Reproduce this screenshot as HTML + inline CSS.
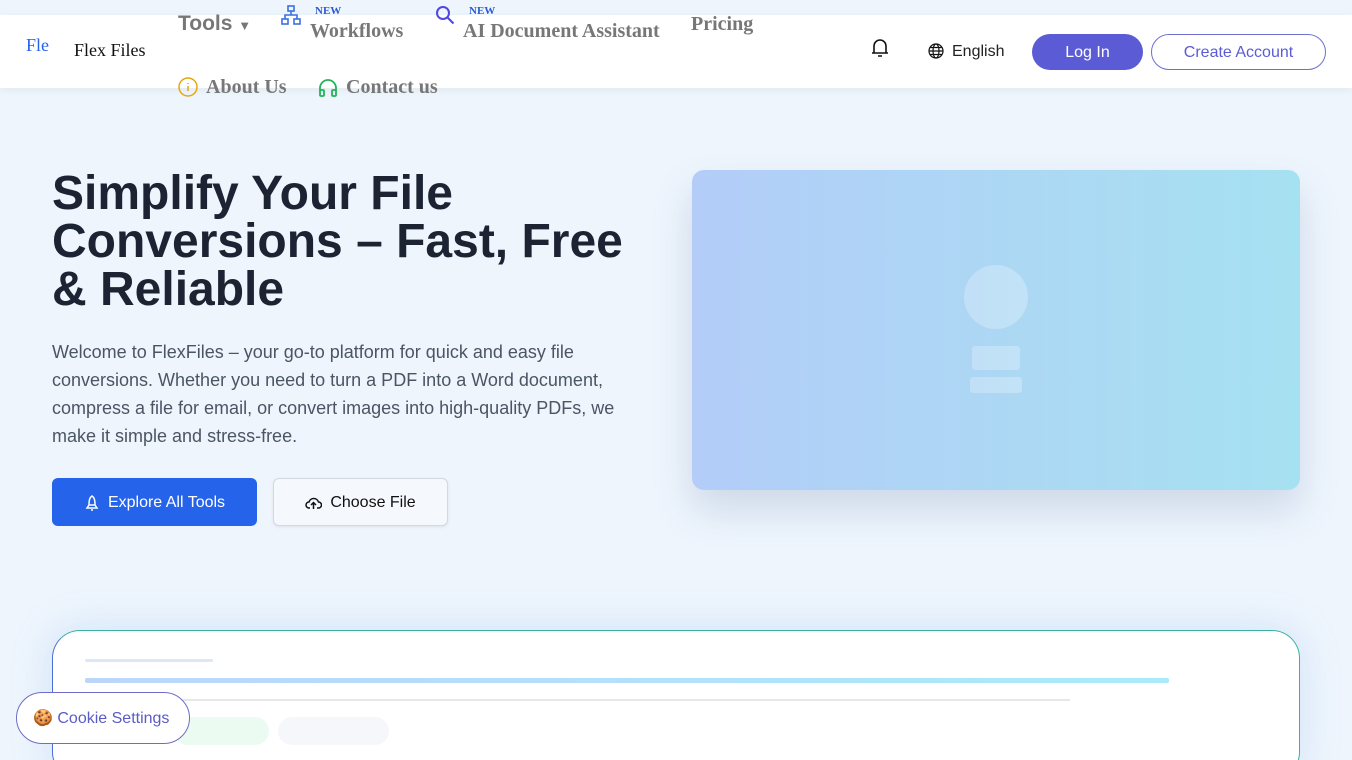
<!DOCTYPE html>
<html><head><meta charset="utf-8"><style>
*{box-sizing:border-box;margin:0;padding:0}
html,body{width:1352px;height:760px;overflow:hidden}
body{background:#eef5fd;font-family:"Liberation Sans",sans-serif;position:relative}
.hdr{position:absolute;left:0;top:15px;width:1352px;height:73px;background:#fff;box-shadow:0 2px 8px rgba(0,0,0,.06)}
.nav{position:absolute;font-family:"Liberation Serif",serif;font-weight:bold;font-size:20px;color:#777}
.new{position:absolute;font-family:"Liberation Serif",serif;font-weight:bold;font-size:11px;color:#2a5bd7}
h1{position:absolute;left:52px;top:170px;font-size:48px;line-height:48px;color:#1c2433;font-weight:bold;width:590px}
.p{position:absolute;left:52px;top:338px;width:590px;font-size:18px;line-height:28px;color:#4b5563}
.btn{position:absolute;display:flex;align-items:center;justify-content:center;gap:8px;font-size:16px}
</style></head><body>
<div class="hdr"></div>
<div style="position:absolute;left:26px;top:35px;font-family:'Liberation Serif',serif;font-size:18px;color:#2563eb">Fle</div>
<div style="position:absolute;left:74px;top:40px;font-family:'Liberation Serif',serif;font-size:18px;color:#111">Flex Files</div>
<div style="position:absolute;left:178px;top:12px;font-weight:bold;font-size:21px;color:#777">Tools <span style="font-size:13px">▼</span></div>
<svg style="position:absolute;left:281px;top:5px" width="20" height="21" viewBox="0 0 20 21" fill="none" stroke="#3b6fe0" stroke-width="1.6"><rect x="7" y="1" width="6" height="5"/><rect x="1" y="14" width="6" height="5"/><rect x="13" y="14" width="6" height="5"/><path d="M10 6v4M4 14v-4h12v4"/></svg>
<div class="new" style="left:315px;top:5px">NEW</div>
<div class="nav" style="left:310px;top:20px">Workflows</div>
<svg style="position:absolute;left:435px;top:5px" width="20" height="20" viewBox="0 0 20 20" fill="none" stroke="#4f46e5" stroke-width="2"><circle cx="8" cy="8" r="6"/><path d="M12.5 12.5l6 6"/></svg>
<div class="new" style="left:469px;top:5px">NEW</div>
<div class="nav" style="left:463px;top:20px">AI Document Assistant</div>
<div class="nav" style="left:691px;top:13px">Pricing</div>
<svg style="position:absolute;left:178px;top:77px" width="20" height="20" viewBox="0 0 20 20" fill="none" stroke="#e2a90c" stroke-width="1.5"><circle cx="10" cy="10" r="9"/><path d="M10 9v5M10 6v1"/></svg>
<div class="nav" style="left:206px;top:76px">About Us</div>
<svg style="position:absolute;left:318px;top:78px" width="20" height="19" viewBox="0 0 20 19" fill="none" stroke="#22b35a" stroke-width="1.8"><path d="M2 13V10a8 8 0 0 1 16 0v3"/><rect x="2" y="12" width="4" height="6" rx="1"/><rect x="14" y="12" width="4" height="6" rx="1"/></svg>
<div class="nav" style="left:346px;top:76px">Contact us</div>
<svg style="position:absolute;left:871px;top:38px" width="18" height="20" viewBox="0 0 18 20" fill="none" stroke="#111" stroke-width="1.6"><path d="M3 15V8a6 6 0 0 1 12 0v7H3zM1 15h16M7 18h4"/></svg>
<svg style="position:absolute;left:928px;top:43px" width="16" height="16" viewBox="0 0 16 16" fill="none" stroke="#111" stroke-width="1.2"><circle cx="8" cy="8" r="7"/><ellipse cx="8" cy="8" rx="3" ry="7"/><path d="M1 8h14M2 4.5h12M2 11.5h12"/></svg>
<div style="position:absolute;left:952px;top:43px;font-size:16px;color:#222">English</div>
<div class="btn" style="left:1032px;top:34px;width:111px;height:36px;border-radius:18px;background:#5b5bd6;color:#fff;padding-top:2px">Log In</div>
<div class="btn" style="left:1151px;top:34px;width:175px;height:36px;border-radius:18px;border:1px solid #6f6fd0;color:#5b5bd6;background:#fff;padding-top:2px">Create Account</div>
<h1>Simplify Your File Conversions – Fast, Free &amp; Reliable</h1>
<div class="p">Welcome to FlexFiles – your go-to platform for quick and easy file conversions. Whether you need to turn a PDF into a Word document, compress a file for email, or convert images into high-quality PDFs, we make it simple and stress-free.</div>
<div class="btn" style="left:52px;top:478px;width:205px;height:48px;border-radius:6px;background:#2563eb;color:#fff;padding-top:2px"><svg width="16" height="16" viewBox="0 0 16 16" fill="none" stroke="#fff" stroke-width="1.5"><path d="M8 1c3 2 3 6 3 9H5c0-3 0-7 3-9zM5 10l-2 3h10l-2-3M7 15h2"/></svg>Explore All Tools</div>
<div class="btn" style="left:273px;top:478px;width:175px;height:48px;border-radius:6px;background:#f5f8fd;border:1px solid #d4d8df;color:#111;box-shadow:0 1px 3px rgba(0,0,0,.08);padding-top:2px"><svg width="17" height="14" viewBox="0 0 17 14" fill="none" stroke="#111" stroke-width="1.5"><path d="M5 12H4a3 3 0 0 1 0-6 5 5 0 0 1 9.5 0 3 3 0 0 1 0 6H12M8.5 13V7M6 9l2.5-2.5L11 9"/></svg>Choose File</div>
<div style="position:absolute;left:692px;top:170px;width:608px;height:320px;border-radius:12px;background:linear-gradient(90deg,#b3cdf8,#a6e1f1);box-shadow:0 20px 40px rgba(60,90,140,.18)">
<div style="position:absolute;left:272px;top:95px;width:64px;height:64px;border-radius:50%;background:rgba(255,255,255,.25)"></div>
<div style="position:absolute;left:280px;top:176px;width:48px;height:24px;border-radius:3px;background:rgba(255,255,255,.25)"></div>
<div style="position:absolute;left:278px;top:207px;width:52px;height:16px;border-radius:3px;background:rgba(255,255,255,.25)"></div>
</div>
<div style="position:absolute;left:52px;top:630px;width:1248px;height:150px;border-radius:28px;background:#fff;border:1px solid #3bb0a0;border-left-color:#4a6fd8;box-shadow:0 0 40px rgba(120,170,230,.25)">
<div style="position:absolute;left:32px;top:28px;width:128px;height:3px;background:#dde8f6;border-radius:2px"></div>
<div style="position:absolute;left:32px;top:47px;width:1084px;height:5px;background:linear-gradient(90deg,#bcd6fa,#a9ebf9);border-radius:2px"></div>
<div style="position:absolute;left:32px;top:68px;width:985px;height:2px;background:#e5e7eb"></div>
<div style="position:absolute;left:120px;top:86px;width:96px;height:28px;border-radius:14px;background:#ecfbf2"></div>
<div style="position:absolute;left:225px;top:86px;width:111px;height:28px;border-radius:14px;background:#f5f7fa"></div>
</div>
<div class="btn" style="left:16px;top:692px;width:174px;height:52px;border-radius:26px;background:#fff;border:1px solid #6d6dc8;color:#5b5bc6;justify-content:flex-start;padding-left:16px">🍪 Cookie Settings</div>
</body></html>
